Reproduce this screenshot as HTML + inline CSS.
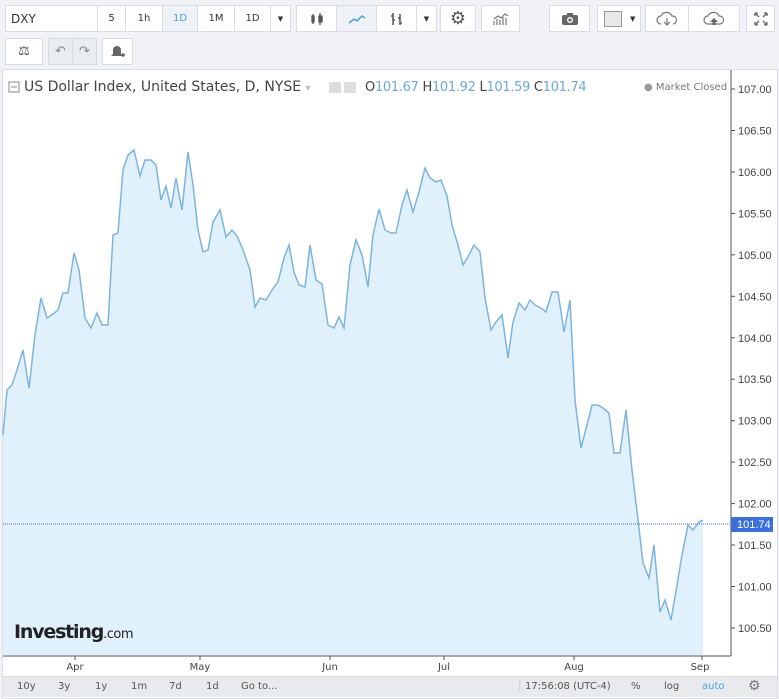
<!DOCTYPE html>
<html><head><meta charset="utf-8">
<style>
*{box-sizing:border-box;margin:0;padding:0}
body{width:779px;height:699px;background:#f0f2f5;font-family:"DejaVu Sans","Liberation Sans",sans-serif;position:relative;overflow:hidden;color:#333}
.b{position:absolute;background:#fff;border:1px solid #d9dde3;display:flex;align-items:center;justify-content:center;font-size:10px;color:#333}
.t{position:absolute;font-size:11px}
</style></head><body>
<div class="b" style="left:5px;top:5px;width:93px;height:27px;justify-content:flex-start;padding-left:5px;font-size:12px">DXY</div>
<div class="b" style="left:97px;top:5px;width:29px;height:27px">5</div>
<div class="b" style="left:125px;top:5px;width:38px;height:27px">1h</div>
<div class="b" style="left:162px;top:5px;width:36px;height:27px;background:#eef2f6;color:#4a9fd8">1D</div>
<div class="b" style="left:197px;top:5px;width:38px;height:27px">1M</div>
<div class="b" style="left:234px;top:5px;width:37px;height:27px">1D</div>
<div class="b" style="left:270px;top:5px;width:21px;height:27px;font-size:7px">▼</div>
<div class="b" style="left:296px;top:5px;width:41px;height:27px"><svg width="16" height="16"><path d="M4 3v10M3 5h2v6H3zM11 2v12M10 5h3v6h-3z" stroke="#555" stroke-width="1.3" fill="none"/><rect x="10" y="5" width="3" height="6" fill="#555"/></svg></div>
<div class="b" style="left:336px;top:5px;width:41px;height:27px;background:#eef2f6"><svg width="18" height="12"><path d="M1 10l5-4 3 2 5-5 3 2" stroke="#4a9fd8" stroke-width="1.5" fill="none"/></svg></div>
<div class="b" style="left:376px;top:5px;width:41px;height:27px"><svg width="16" height="16"><path d="M4 2v12M2 5h2M4 9h2M11 3v11M9 7h2M11 12h2" stroke="#555" stroke-width="1.5" fill="none"/></svg></div>
<div class="b" style="left:416px;top:5px;width:21px;height:27px;font-size:7px">▼</div>
<div class="b" style="left:440px;top:5px;width:36px;height:27px"><span style="font-size:18px;color:#555">⚙</span></div>
<div class="b" style="left:481px;top:5px;width:39px;height:27px"><svg width="18" height="14"><path d="M2 13V9M5 13V7M8 13V8M11 13V5M14 13V6M2 7l4-3 3 2 4-4 3 2" stroke="#777" stroke-width="1.2" fill="none"/></svg></div>
<div class="b" style="left:549px;top:5px;width:41px;height:27px"><svg width="18" height="14"><rect x="1" y="3" width="16" height="10" rx="2" fill="#666"/><rect x="6" y="1" width="6" height="3" fill="#666"/><circle cx="9" cy="8" r="3" fill="#fff"/><circle cx="9" cy="8" r="1.6" fill="#666"/></svg></div>
<div class="b" style="left:597px;top:5px;width:44px;height:27px;justify-content:flex-start;padding-left:6px"><span style="width:18px;height:16px;border:1px solid #999;background:#e8e8e8;display:inline-block"></span><span style="font-size:7px;margin-left:8px">▼</span></div>
<div class="b" style="left:645px;top:5px;width:44px;height:27px"><svg width="22" height="16"><path d="M5 13a4 4 0 0 1 0-8 6 6 0 0 1 11 0 4 4 0 0 1 1 8M11 7v7M8 11l3 3 3-3" stroke="#777" stroke-width="1.2" fill="none"/></svg></div>
<div class="b" style="left:688px;top:5px;width:52px;height:27px"><svg width="22" height="16"><path d="M5 13a4 4 0 0 1 0-8 6 6 0 0 1 11 0 4 4 0 0 1 1 8z" stroke="#777" stroke-width="1.2" fill="none"/><path d="M11 7l-4 4h2.5v3h3v-3H15z" fill="#666"/></svg></div>
<div class="b" style="left:746px;top:5px;width:29px;height:27px"><svg width="14" height="14"><path d="M1 1l4 4M1 1h3M1 1v3M13 1l-4 4M13 1h-3M13 1v3M1 13l4-4M1 13h3M1 13v-3M13 13l-4-4M13 13h-3M13 13v-3" stroke="#666" stroke-width="1.3" fill="none"/></svg></div>
<div class="b" style="left:5px;top:38px;width:38px;height:27px;font-size:13px;color:#555">⚖</div>
<div class="b" style="left:48px;top:38px;width:25px;height:27px;background:#e9ecf0;color:#888;font-size:13px">↶</div>
<div class="b" style="left:72px;top:38px;width:25px;height:27px;background:#e9ecf0;color:#888;font-size:13px">↷</div>
<div class="b" style="left:102px;top:38px;width:31px;height:27px"><svg width="16" height="16"><path d="M7 2a4 4 0 0 0-4 4v4l-2 2h12l-2-2V6a4 4 0 0 0-4-4z" fill="#666"/><path d="M11 11h4M13 9v4" stroke="#666" stroke-width="1.5"/></svg></div>
<div style="position:absolute;left:2px;top:69px;width:776px;height:630px;background:#fff;border:1px solid #d9dde3"></div>
<svg style="position:absolute;left:0;top:0" width="779" height="699">
<polygon fill="#e1f1fb" points="3,435 7,390 12,385 17,370 23,350 29,388 35,335 41,298 47,318 53,314 58,310 63,293 68,293 74,253 79,270 85,318 91,328 97,313 102,325 108,325 113,235 118,233 123,170 128,155 134,150 140,176 145,160 151,160 156,165 161,200 166,186 171,208 176,178 182,210 188,152 193,185 198,230 203,252 208,250 213,222 220,210 226,237 232,230 237,236 243,250 250,270 255,307 260,298 266,300 272,290 278,282 284,258 289,245 294,272 299,285 305,287 310,245 316,280 322,284 328,325 334,328 339,317 344,328 350,265 356,240 362,255 368,287 373,235 379,209 385,230 391,233 396,233 402,205 407,190 413,212 419,192 425,168 430,178 436,182 441,180 447,196 452,225 458,245 463,265 469,255 474,245 480,252 485,298 491,330 496,322 502,315 508,358 513,322 519,303 525,310 530,300 535,305 541,308 546,312 552,292 558,292 564,332 570,300 575,400 581,448 587,425 592,405 598,405 603,408 609,413 614,453 620,453 626,410 632,470 638,520 643,563 649,578 654,545 660,612 665,600 671,620 677,585 682,555 688,525 693,530 699,522 703,520 703,655 3,655"/>
<polyline fill="none" stroke="#7cb4e0" stroke-width="1.5" points="3,435 7,390 12,385 17,370 23,350 29,388 35,335 41,298 47,318 53,314 58,310 63,293 68,293 74,253 79,270 85,318 91,328 97,313 102,325 108,325 113,235 118,233 123,170 128,155 134,150 140,176 145,160 151,160 156,165 161,200 166,186 171,208 176,178 182,210 188,152 193,185 198,230 203,252 208,250 213,222 220,210 226,237 232,230 237,236 243,250 250,270 255,307 260,298 266,300 272,290 278,282 284,258 289,245 294,272 299,285 305,287 310,245 316,280 322,284 328,325 334,328 339,317 344,328 350,265 356,240 362,255 368,287 373,235 379,209 385,230 391,233 396,233 402,205 407,190 413,212 419,192 425,168 430,178 436,182 441,180 447,196 452,225 458,245 463,265 469,255 474,245 480,252 485,298 491,330 496,322 502,315 508,358 513,322 519,303 525,310 530,300 535,305 541,308 546,312 552,292 558,292 564,332 570,300 575,400 581,448 587,425 592,405 598,405 603,408 609,413 614,453 620,453 626,410 632,470 638,520 643,563 649,578 654,545 660,612 665,600 671,620 677,585 682,555 688,525 693,530 699,522 703,520"/>
<line x1="3" y1="524" x2="731" y2="524" stroke="#4a6fd0" stroke-width="1" stroke-dasharray="1,1"/>
<line x1="731" y1="70" x2="731" y2="656" stroke="#555" stroke-width="1"/>
<line x1="3" y1="656" x2="731" y2="656" stroke="#555" stroke-width="1"/>
<g stroke="#555">
<line x1="731" y1="89" x2="735" y2="89"/><line x1="731" y1="130.5" x2="735" y2="130.5"/><line x1="731" y1="172" x2="735" y2="172"/><line x1="731" y1="213.4" x2="735" y2="213.4"/><line x1="731" y1="254.8" x2="735" y2="254.8"/><line x1="731" y1="296.3" x2="735" y2="296.3"/><line x1="731" y1="337.8" x2="735" y2="337.8"/><line x1="731" y1="379.2" x2="735" y2="379.2"/><line x1="731" y1="420.7" x2="735" y2="420.7"/><line x1="731" y1="462.1" x2="735" y2="462.1"/><line x1="731" y1="503.6" x2="735" y2="503.6"/><line x1="731" y1="545" x2="735" y2="545"/><line x1="731" y1="586.5" x2="735" y2="586.5"/><line x1="731" y1="628" x2="735" y2="628"/>
<line x1="75" y1="656" x2="75" y2="660"/><line x1="200" y1="656" x2="200" y2="660"/><line x1="330" y1="656" x2="330" y2="660"/><line x1="444" y1="656" x2="444" y2="660"/><line x1="574" y1="656" x2="574" y2="660"/><line x1="702" y1="656" x2="702" y2="660"/>
</g>
<g font-family="Liberation Sans, sans-serif" font-size="11" fill="#444">
<text x="738" y="93">107.00</text><text x="738" y="134.5">106.50</text><text x="738" y="176">106.00</text><text x="738" y="217.4">105.50</text><text x="738" y="258.8">105.00</text><text x="738" y="300.3">104.50</text><text x="738" y="341.8">104.00</text><text x="738" y="383.2">103.50</text><text x="738" y="424.7">103.00</text><text x="738" y="466.1">102.50</text><text x="738" y="507.6">102.00</text><text x="738" y="549">101.50</text><text x="738" y="590.5">101.00</text><text x="738" y="632">100.50</text>
</g>
<g font-family="DejaVu Sans, sans-serif" font-size="10" fill="#444" text-anchor="middle">
<text x="75" y="670">Apr</text><text x="200" y="670">May</text><text x="330" y="670">Jun</text><text x="444" y="670">Jul</text><text x="574" y="670">Aug</text><text x="700" y="670">Sep</text>
</g>
<rect x="731" y="517" width="42" height="15" fill="#3c6fdc"/>
<text x="737" y="528" font-family="Liberation Sans, sans-serif" font-size="11" fill="#fff">101.74</text>
<rect x="9" y="82" width="10" height="10" fill="none" stroke="#888"/><line x1="11" y1="87" x2="17" y2="87" stroke="#888"/>
</svg>
<div class="t" style="left:24px;top:79px;font-size:14px;color:#444">US Dollar Index, United States, D, NYSE <span style="color:#bbb;font-size:10px">▾</span></div>
<div style="position:absolute;left:329px;top:82px;width:12px;height:11px;background:#ddd"></div>
<div style="position:absolute;left:344px;top:82px;width:12px;height:11px;background:#ddd"></div>
<div class="t" style="left:365px;top:80px;font-size:13px;color:#444;letter-spacing:-0.3px">O<span style="color:#6fa8d8">101.67</span>&nbsp;H<span style="color:#6fa8d8">101.92</span>&nbsp;L<span style="color:#6fa8d8">101.59</span>&nbsp;C<span style="color:#6fa8d8">101.74</span></div>
<div class="t" style="left:644px;top:82px;font-size:10px;color:#777"><span style="color:#999">●</span> Market Closed</div>
<div class="t" style="left:14px;top:621px;font-size:19px;font-weight:bold;color:#222;letter-spacing:-1.2px">Investing<span style="font-size:13px;font-weight:normal;letter-spacing:-0.5px">.com</span></div>
<div style="position:absolute;left:3px;top:676px;width:774px;height:21px;background:#e8eaed;border-top:1px solid #ddd;font-size:10px;color:#555">
<span style="position:absolute;left:14px;top:4px">10y</span><span style="position:absolute;left:55px;top:4px">3y</span><span style="position:absolute;left:92px;top:4px">1y</span><span style="position:absolute;left:128px;top:4px">1m</span><span style="position:absolute;left:166px;top:4px">7d</span><span style="position:absolute;left:203px;top:4px">1d</span><span style="position:absolute;left:238px;top:4px">Go to...</span>
<span style="position:absolute;left:515px;top:3px;color:#ccc">|</span>
<span style="position:absolute;left:522px;top:4px">17:56:08 (UTC-4)</span><span style="position:absolute;left:628px;top:4px">%</span><span style="position:absolute;left:661px;top:4px">log</span><span style="position:absolute;left:699px;top:4px;color:#4aa3df">auto</span><span style="position:absolute;left:745px;top:1px;font-size:14px;color:#777">⚙</span>
</div>
</body></html>
